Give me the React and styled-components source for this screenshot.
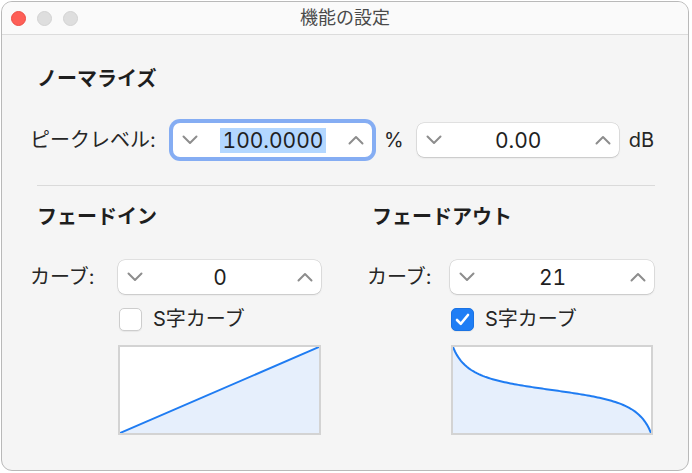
import styled, { createGlobalStyle } from "styled-components";

const GlobalStyle = createGlobalStyle`
  html, body {
    margin: 0;
    padding: 0;
    background: #ffffff;
  }
  body {
    font-family: Inter, "Noto Sans CJK JP", sans-serif;
    color: #262626;
  }
`;

const Window = styled.div`
  box-sizing: border-box;
  margin: 1px 0 0 1px;
  width: 688px;
  height: 470px;
  border: 1px solid #b9b9b9;
  border-radius: 11px;
  overflow: hidden;
  background: #f5f5f5;
  display: flex;
  flex-direction: column;
`;

const TitleBar = styled.div`
  height: 32px;
  flex-shrink: 0;
  display: grid;
  grid-template-columns: 1fr auto 1fr;
  align-items: center;
  background: #fafafa;
  border-bottom: 1px solid #dcdcdc;
`;

const Lights = styled.div`
  display: flex;
  gap: 11px;
  padding-left: 9px;
`;

const Light = styled.span`
  width: 15px;
  height: 15px;
  border-radius: 50%;
  box-sizing: border-box;
  background: ${(p) => (p.$close ? "#fe5f57" : "#dedede")};
  border: 1px solid ${(p) => (p.$close ? "#ec4c44" : "#d2d2d2")};
`;

const Title = styled.div`
  font-size: 18px;
  line-height: 22px;
  color: #4a4a4a;
`;

const Content = styled.div`
  padding: 32px 33px 0 28px;
`;

const Heading = styled.h2`
  margin: 0 0 0 ${(p) => p.$indent ?? 7}px;
  font-size: 20px;
  line-height: 24px;
  font-weight: 700;
  color: #1e1e1e;
`;

const PeakRow = styled.div`
  display: flex;
  align-items: center;
  height: 42px;
  margin-top: 28px;
`;

const Label = styled.span`
  width: ${(p) => p.$width}px;
  flex-shrink: 0;
  font-size: 20px;
  line-height: 24px;
  color: #262626;
`;

const Unit = styled.span`
  font-size: 20px;
  line-height: 24px;
  color: #262626;
  margin: 0 ${(p) => p.$right ?? 0}px 0 ${(p) => p.$left ?? 0}px;
`;

const Spin = styled.div`
  box-sizing: border-box;
  width: ${(p) => p.$width}px;
  height: 34px;
  flex-shrink: 0;
  display: flex;
  align-items: center;
  padding: 0 8px 0 9px;
  background: #ffffff;
  border-radius: 7px;
  box-shadow: ${(p) =>
    p.$focused
      ? "0 0 0 4px #85adf3"
      : "0 0 0 0.5px rgba(0,0,0,0.16), 0 1px 2px rgba(0,0,0,0.12)"};
`;

const SpinValue = styled.div`
  flex: 1;
  text-align: center;
  font-size: 21px;
  line-height: 27px;
  font-variant-numeric: tabular-nums;
  color: #1f1f1f;
`;

const Selected = styled.span`
  background: #b3d7ff;
  padding: 0 3px;
`;

const Chevron = ({ up }) => (
  <svg width="16" height="10" viewBox="0 0 16 10">
    <path
      d={up ? "M1.5 8.5 L8 2 L14.5 8.5" : "M1.5 1.5 L8 8 L14.5 1.5"}
      fill="none"
      stroke="#8d8d8d"
      strokeWidth="2"
      strokeLinecap="round"
      strokeLinejoin="round"
    />
  </svg>
);

const Stepper = ({ width, focused, children }) => (
  <Spin $width={width} $focused={focused}>
    <Chevron />
    <SpinValue>{children}</SpinValue>
    <Chevron up />
  </Spin>
);

const Divider = styled.hr`
  margin: 24px 0 0 7px;
  width: 618px;
  border: 0;
  border-top: 1px solid #dadada;
`;

const Columns = styled.div`
  display: grid;
  grid-template-columns: 337px 1fr;
  margin-top: 19px;
`;

const Column = styled.div`
  display: flex;
  flex-direction: column;
`;

const FieldRow = styled.div`
  display: flex;
  align-items: center;
  height: 34px;
  margin-top: 31px;
`;

const CheckRow = styled.label`
  display: flex;
  align-items: center;
  gap: 11px;
  height: 22px;
  margin: 14px 0 0 ${(p) => p.$offset}px;
  font-size: 20px;
  line-height: 24px;
  color: #262626;
`;

const Box = styled.span`
  box-sizing: border-box;
  width: 23px;
  height: 23px;
  border-radius: 5px;
  display: flex;
  align-items: center;
  justify-content: center;
  background: ${(p) => (p.$checked ? "#1f7ef5" : "#ffffff")};
  border: 1px solid ${(p) => (p.$checked ? "#1b73e3" : "#cdcdcd")};
  box-shadow: 0 1px 1px rgba(0, 0, 0, 0.06);
`;

const Checkbox = ({ checked }) => (
  <Box $checked={checked}>
    {checked && (
      <svg width="15" height="13" viewBox="0 0 15 13">
        <path
          d="M2 7 L5.8 10.8 L13 2"
          fill="none"
          stroke="#ffffff"
          strokeWidth="2.6"
          strokeLinecap="round"
          strokeLinejoin="round"
        />
      </svg>
    )}
  </Box>
);

const GraphFrame = styled.div`
  box-sizing: border-box;
  width: ${(p) => p.$width}px;
  height: 90px;
  margin: 15px 0 0 ${(p) => p.$offset}px;
  border: 2px solid #d3d3d3;
  background: #ffffff;
  display: flex;
`;

const GW = 198;
const GH = 86;

const linePoints = () => [
  [0, GH],
  [GW, 0],
];

// fade-out S curve: steep at both ends, nearly flat through the middle
const sCurvePoints = () => {
  const theta = 1.33;
  const pts = [];
  for (let i = 0; i <= 100; i++) {
    const x = i / 100;
    const t = 2 * x - 1;
    const y = 0.5 + 0.5 * (Math.tan(theta * t) / Math.tan(theta));
    pts.push([x * GW, y * GH]);
  }
  return pts;
};

const Graph = ({ points, width, offset }) => {
  const line = points.map(([x, y]) => `${x.toFixed(2)},${y.toFixed(2)}`).join(" ");
  const area = `0,${GH} ${line} ${GW},${GH}`;
  return (
    <GraphFrame $width={width} $offset={offset}>
      <svg width="100%" height="100%" viewBox={`0 0 ${GW} ${GH}`} preserveAspectRatio="none">
        <polygon points={area} fill="#e6effc" />
        <polyline points={line} fill="none" stroke="#1f7cf2" strokeWidth="2" />
      </svg>
    </GraphFrame>
  );
};

export default function App() {
  return (
    <>
      <GlobalStyle />
      <Window>
        <TitleBar>
          <Lights>
            <Light $close />
            <Light />
            <Light />
          </Lights>
          <Title>機能の設定</Title>
          <span />
        </TitleBar>
        <Content>
          <Heading>ノーマライズ</Heading>
          <PeakRow>
            <Label $width={143}>ピークレベル:</Label>
            <Stepper width={199} focused>
              <Selected>100.0000</Selected>
            </Stepper>
            <Unit $left={12} $right={13}>%</Unit>
            <Stepper width={202}>0.00</Stepper>
            <Unit $left={10}>dB</Unit>
          </PeakRow>
          <Divider />
          <Columns>
            <Column>
              <Heading>フェードイン</Heading>
              <FieldRow>
                <Label $width={88}>カーブ:</Label>
                <Stepper width={203}>0</Stepper>
              </FieldRow>
              <CheckRow $offset={89}>
                <Checkbox />
                S字カーブ
              </CheckRow>
              <Graph points={linePoints()} width={203} offset={88} />
            </Column>
            <Column>
              <Heading $indent={5}>フェードアウト</Heading>
              <FieldRow>
                <Label $width={83}>カーブ:</Label>
                <Stepper width={204}>21</Stepper>
              </FieldRow>
              <CheckRow $offset={84}>
                <Checkbox checked />
                S字カーブ
              </CheckRow>
              <Graph points={sCurvePoints()} width={202} offset={84} />
            </Column>
          </Columns>
        </Content>
      </Window>
    </>
  );
}
